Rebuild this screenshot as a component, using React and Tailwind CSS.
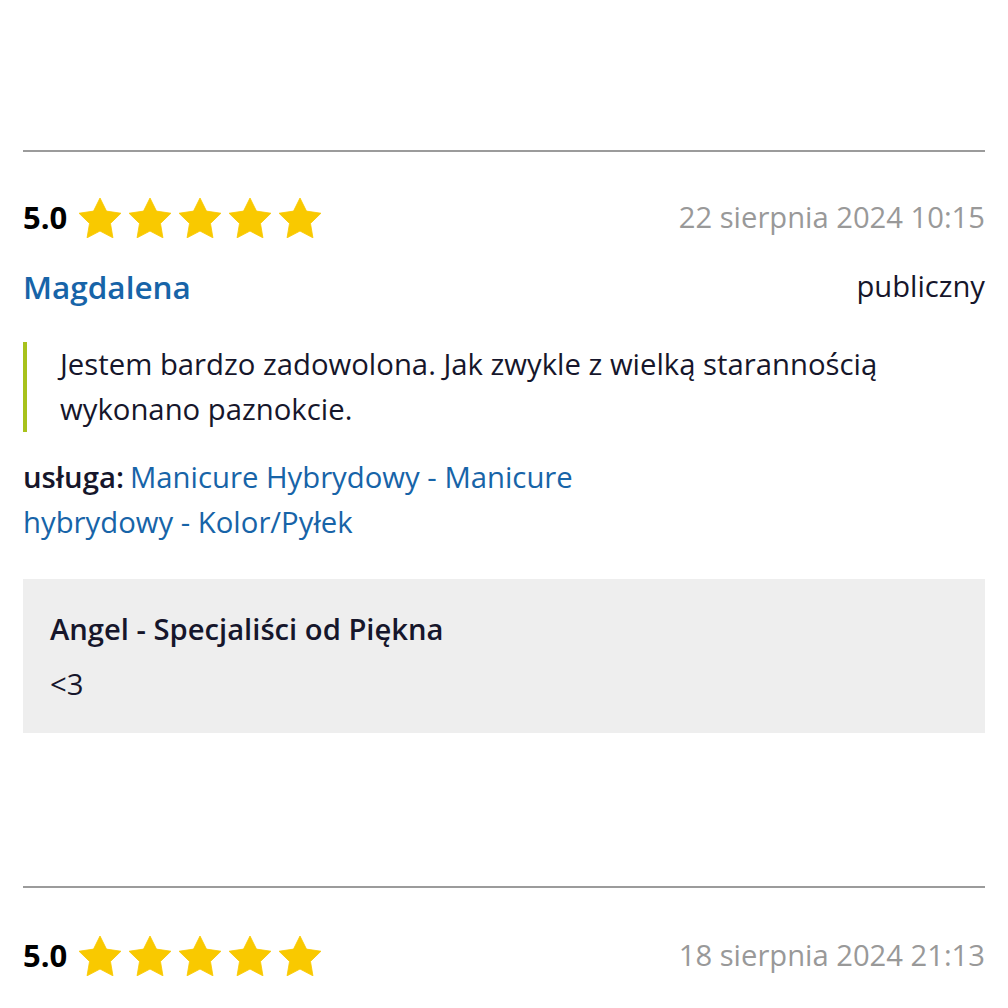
import React from "react";

function Star() {
  return (
    <svg width="42" height="40" viewBox="2 2 20 19.1" className="shrink-0">
      <path
        d="M12 2l3.09 6.26L22 9.27l-5 4.87 1.18 6.88L12 17.77l-6.18 3.25L7 14.14 2 9.27l6.91-1.01L12 2z"
        fill="#f9c900"
        stroke="#f9c900"
        strokeWidth="0.4"
        strokeLinejoin="round"
      />
    </svg>
  );
}

function Rating({ date }) {
  return (
    <div className="flex items-center justify-between h-[45px]">
      <div className="flex items-center">
        <span className="font-bold text-[31px] text-black mr-[12px]">5.0</span>
        <div className="flex items-center gap-[8px]">
          <Star />
          <Star />
          <Star />
          <Star />
          <Star />
        </div>
      </div>
      <span className="text-[29.2px] text-[#999999]">{date}</span>
    </div>
  );
}

export default function App() {
  return (
    <div
      className="bg-white w-[1008px] h-[1008px] overflow-hidden px-[23px] text-[#16162b] leading-[45px]"
      style={{ fontFamily: '"Open Sans", "Noto Sans", sans-serif' }}
    >
      <div className="h-[150px]" />
      <div className="border-t-2 border-[#9b9b9b]" />
      <div className="pt-[43px]">
        <Rating date="22 sierpnia 2024 10:15" />
        <div className="flex items-center justify-between mt-[24px]">
          <span className="text-[31.5px] font-semibold text-[#1764a8]">Magdalena</span>
          <span className="text-[29.2px]">publiczny</span>
        </div>
        <div className="mt-[33px] border-l-[4px] border-[#a8c21c] pl-[33px] text-[29.3px] leading-[45px]">
          Jestem bardzo zadowolona. Jak zwykle z wielką starannością
          <br />
          wykonano paznokcie.
        </div>
        <div className="mt-[23px] text-[29.3px] leading-[45px] w-[600px]">
          <span className="font-semibold mr-[6px]">usługa:</span>
          <span className="text-[#1764a8]">
            Manicure Hybrydowy - Manicure hybrydowy - Kolor/Pyłek
          </span>
        </div>
        <div className="mt-[34px] bg-[#eeeeee] h-[154px] px-[27px] pt-[28px]">
          <div className="text-[29.2px] font-semibold leading-[45px]">
            Angel - Specjaliści od Piękna
          </div>
          <div className="text-[29.3px] leading-[45px] mt-[10px]">&lt;3</div>
        </div>
      </div>
      <div className="h-[153px]" />
      <div className="border-t-2 border-[#9b9b9b]" />
      <div className="pt-[45px]">
        <Rating date="18 sierpnia 2024 21:13" />
      </div>
    </div>
  );
}
